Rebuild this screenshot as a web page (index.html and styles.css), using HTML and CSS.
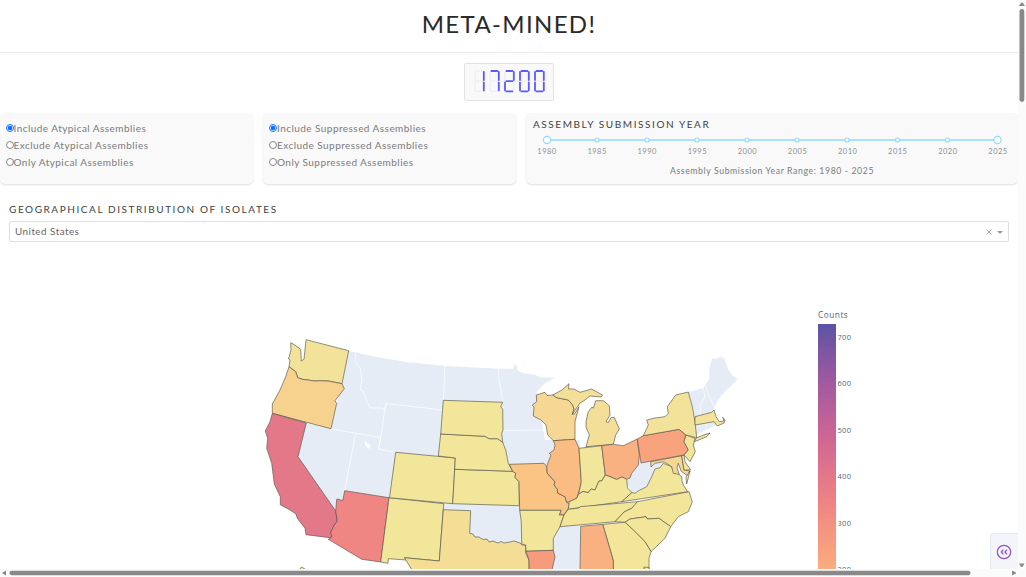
FILE: index.html
```html
<!DOCTYPE html>
<html lang="en">
<head>
<meta charset="utf-8">
<title>META-MINED!</title>
<link rel="stylesheet" href="styles.css">
</head>
<body>
<div class="app">
<main class="page">
  <header class="header"><h1>META-MINED!</h1></header>
  <div class="counter">
    <svg id="lcd" width="88" height="36" viewBox="0 0 88 36" role="img" aria-label="17200"></svg>
  </div>
  <section class="filters">
    <div class="card choices">
      <label><i class="radio on"></i><span>Include Atypical Assemblies</span></label>
      <label><i class="radio"></i><span>Exclude Atypical Assemblies</span></label>
      <label><i class="radio"></i><span>Only Atypical Assemblies</span></label>
    </div>
    <div class="card choices">
      <label><i class="radio on"></i><span>Include Suppressed Assemblies</span></label>
      <label><i class="radio"></i><span>Exclude Suppressed Assemblies</span></label>
      <label><i class="radio"></i><span>Only Suppressed Assemblies</span></label>
    </div>
    <div class="card years">
      <h2>ASSEMBLY SUBMISSION YEAR</h2>
      <svg class="track" width="466" height="12" viewBox="539 134 466 12">
        <path d="M547 140H997.500" stroke="#abe2fb" stroke-width="2.200"/>
        <g fill="#fff" stroke="#96dbfa" stroke-width="1.200">
          <circle cx="597" cy="140" r="2"/><circle cx="647" cy="140" r="2"/><circle cx="697" cy="140" r="2"/><circle cx="747" cy="140" r="2"/><circle cx="797" cy="140" r="2"/><circle cx="847" cy="140" r="2"/><circle cx="897.500" cy="140" r="2"/><circle cx="947.500" cy="140" r="2"/>
          <circle cx="547" cy="140" r="3.600"/><circle cx="997.500" cy="140" r="3.600"/>
        </g>
      </svg>
      <div class="ticks"><span>1980</span><span>1985</span><span>1990</span><span>1995</span><span>2000</span><span>2005</span><span>2010</span><span>2015</span><span>2020</span><span>2025</span></div>
      <p>Assembly Submission Year Range: 1980 - 2025</p>
    </div>
  </section>
  <section class="geo">
    <h2>GEOGRAPHICAL DISTRIBUTION OF ISOLATES</h2>
    <div class="select"><span>United States</span>
      <svg width="20" height="10" viewBox="0 0 20 10"><path d="M2.500 2.500l5 5m0-5l-5 5" stroke="#aaa" stroke-width="1"/><path d="M13 4h6l-3 3z" fill="#999"/></svg>
    </div>
  </section>
  <section class="plot">
    <svg class="map" width="500" height="245" viewBox="250 324 500 245">
      <g class="land">
        <path d="M348.700 350.700L375 356.700 408.300 362.300 445 366 498.300 368.700 513.300 368.700 514.300 364 516.300 364.700 517.700 370.700 523 373 535 374.700 541 377.500 555 377.700 544 384 536.700 391.700 545 440 580 440V569H500L450 555H385L345 530 335.700 511 298 456.700 306.300 423 331 428.700 342 383Z"/>
        <path d="M639.300 455L641 463 650.700 461.700 651 467 655 463.300 664 461.700 660 467.700 655 469 651.700 476.700 646.700 486.700 638 491 635 493.300 630.500 491 626.700 481.700 631.700 473.300 638.300 465Z"/>
        <path d="M688.300 392L703.300 388.300 705 385 709.300 379 709.300 368.300 712.300 358.300 715.500 359 721 356.700 724.500 359 728.300 370 732 375 737.700 379.300 731.700 385 721.700 395 718 400 714 408.300 711.700 412.300 695 416.700 692.300 406.700Z"/>
        <path d="M695 425L714 421.700 716 425 706 430 696 434.300Z"/>
        <path class="lines" d="M355.500 352.500L355 361 360 368 362 380 360 390 363 391 367 402 370 408 382 408 385 410 387 403M331 428.700L380.700 437.700M355.500 434L344.700 490.700M380.700 437.700L378.500 449 395.700 452.300M385.500 403L382 430 378.500 449M385.500 403.500L443 410M445 366L443.300 400.300M498.300 368.700L499 380 501 390 502.700 402M503 430.500L545 430M703.300 388.300L705 397 701 403 700 415M705 385L710 398 715 408M706 423L706 430"/>
        <path fill="#fff" stroke="none" d="M364.500 440.500l6 4.500-1 4-4-3z"/>
      </g>
      <g class="states">
        <path fill="#f3e39a" d="M290.700 342.700L295 345 300.700 349.300 301.300 361 304 359.300 305.300 346.700 306 339.700 348.700 350.700 342 383.700 328.300 381 320 380.800 314 381 308.300 380 303 379.500 297.700 377.700 295.700 371.700 289 366.700 290 360 288.500 359 291 350Z"/>
        <path fill="#f7d18e" d="M289 366.700L295.700 371.700 297.700 377.700 303 379.500 308.300 380 314 381 320 380.800 328.300 381 342 383.700 344.300 388.700 335 400.700 336.700 403.300 331 428.700 272.300 413.300V404L280 390 285.700 376.700Z"/>
        <path fill="#e37889" d="M272.300 413.300L306.300 423 298 456.700 335.700 511 337.300 521 333.700 526 330.700 532.300 332 536.700 330 537.700 306 534.700 305 528.300 297.300 518.300 296 514 290 510 280.300 504.700V496.700L274.300 484 271.700 463.300 266.700 448.300 267.700 438.300 265.300 431 270 421.700Z"/>
        <path fill="#ef8683" d="M344.700 490.700L389 497.700 380.700 562 361.700 559.300 328.300 539.300 332 536.700 330.700 532.300 333.700 526 337.300 521 335.700 511 336.700 499.300 338 499 342.700 500.700Z"/>
        <path d="M389 497.700L443.700 503.700 439.300 561 405 557.700 406.300 560 388.300 558.700 388 563.300 380.700 562Z"/>
        <path d="M395.700 452.300L455.300 458 452.700 503.700 389.500 497.700Z"/>
        <path d="M454.700 469.300L512.700 471.300 515.700 473.300 515 477.300 519 481.700 519.300 505.700 452.700 503.700Z"/>
        <path d="M440.700 434L485 436.300 489 438.700 497.700 438.700 502.700 442.300 505.700 450 508.300 463.300 512.700 471.300 454.700 469.300 455.300 458 438.300 456Z"/>
        <path d="M443.300 400.300L502.700 402.300 500.700 406.700 502.700 409.300 503 430 501.700 433.300 502.700 442.300 497.700 438.700 489 438.700 485 436.300 440.700 434Z"/>
        <path fill="#f4de96" d="M443.300 509.700L470.700 510.700 469.700 533.300 473 534 475 537 479 537 483 539.500 487 539 489 542 493 541 498 543 501 541.500 504 543 510 542 514 541 520 543 522 545 525.700 545 525.700 553.300 529 560V571H412.700L404.300 557.700 439.300 561Z"/>
        <path fill="#fac484" d="M509.300 464.300L544 463.300 546.700 466.700 547.300 473.300 555 481.700 554 485 557.300 489 557.500 493 565 496.700 566.700 502.300 569.300 504 568.300 508.300 564 515 559.300 515 561 510.300 519.700 510.300 519 481.700 515 477.300 515.700 473.300 512.700 471.300Z"/>
        <path d="M519.700 510.300L561 510.300 559.300 515 564 515 560 526.700 553.300 538.300 553.300 550.300 526 551.300 525.700 545 521.700 544 521.300 521.700Z"/>
        <path fill="#f79b7d" d="M526 551.300L553.300 550.300 555 557 551.700 571H529.300L529 560Z"/>
        <path fill="#f6d794" d="M536.300 395L545 392.300 547 395.500 552.700 395 556.700 397.700 568.300 400 572.700 405 574 409 572.300 414.300 574.500 414 579 406.700 575 421.700V439.300L553.300 440.700 547.700 435 546 425 541 420 533.300 416 534 407 532.300 405 536.700 401.700Z"/>
        <path fill="#f3df98" d="M552.700 395L562 390 569 383.700 568.500 389 574 389 580 392.300 591.700 389 596 391.500 602.700 395 601 397 590 396 585 400 580 403 572.300 414.300 574 409 572.700 405 568.300 400 556.700 397.700Z"/>
        <path fill="#f3df98" d="M595.700 400.700L603.300 400.700 609.300 405.700 610 415 606 421.700 608.300 422.700 611 417.500 614.300 417.300 619.300 429 615.700 435 613.300 444.300 586 446.700 589.300 435 586 427 586 421.700 588.300 411.700 592 407 593.300 408.300Z"/>
        <path fill="#fabc82" d="M553.300 440.700L575 439.300 579 448.300 581.300 481.700 579.300 490 576.700 498.300 569.300 501.700 566.700 502.300 565 496.700 557.500 493 557.300 489 554 485 555 481.700 547.300 473.300 546.700 466.700 548.300 461.700 551 455 549.300 453.300 554 450 555 445Z"/>
        <path d="M579 448.300L601.700 445.700 605.300 475 601.700 481 599 481 595 490 591 489 588.300 492.700 583 491.500 578.700 494 581.300 481.700Z"/>
        <path fill="#f9b181" d="M601.700 445.700L613.300 444.300 623.300 445.700 637.300 439 639.300 455 638.300 465 631.700 473.300 630 478 626.700 479.300 622 477 616.700 479.500 610 476.700 605.300 475Z"/>
        <path d="M605.300 475L610 476.700 616.700 479.500 622 477 626.700 479.300 627.500 488 632 492.500 621.700 501.700 568.300 509.300 569.300 501.700 576.700 498.300 578.700 494 583 491.500 588.300 492.700 591 489 595 490 599 481 601.700 481Z"/>
        <path d="M568.300 509.300L579 508 580 506.700 637.300 501.700 636 504 631.700 508.300 624 512 615 521.700 560 526.700 564 515Z"/>
        <path fill="#f3e59a" d="M637.300 501.700L689 491.700 692.300 501.700 688.300 511.700 678.300 516.700 670.700 526.700 659 518.300 647.300 519 646 516.700 630 519 625 522.300 615 521.700 624 512 631.700 508.300Z"/>
        <path d="M625 522.300L630 519 646 516.700 647.300 519 659 518.300 670.700 526.700 665 538.300 651 551.700 645 541.700 633.300 530Z"/>
        <path fill="#f3e59a" d="M602.700 524.300L625 522.300 633.300 530 645 541.700 651 551.700 649 558.300V571H613.300L613.300 561 611.700 555Z"/>
        <path fill="#f9b181" d="M580.700 526.300L602.700 524.300 611.700 555 613.300 561V571H580Z"/>
        <path d="M635 493.300L638 491 646.700 486.700 651.700 476.700 655 469 660 467.700 663.300 463.300 671.700 466.700 672.700 470 677 473 681.700 476.700 682 481 683.300 485 687.700 491.700 621.700 501.700 632 492.500Z"/>
        <path fill="#f5d693" d="M650.700 461.700L681.700 455.700 684 470 690 471 687.300 475.700 681 471 678.300 463.300 677 468 679.300 474.300 673.300 473.300 671.700 466.700 664 461.700 655 463.300 651 467Z"/>
        <path d="M681.700 455.700L684 455 685 461.700 690.700 470 684 470ZM690 471L686.700 484 686 477Z"/>
        <path fill="#f8a27e" d="M637.300 439L643.300 435.700 679 429.300 686 435 684 441.700 688.300 450 684 455 641 463Z"/>
        <path d="M686 435L695 438.300 693.300 445 695.300 451.700 690 461.700 684 455 688.300 450 684 441.700Z"/>
        <path fill="#f3e39a" d="M643.300 435.700L648.300 425 646.700 420 655 418 665 416.700 668.300 413.300 667.300 406.700 675.700 395 688.300 392 692.300 406.700 695 421.700 696.700 437.700 686 435 679 429.300ZM696 438L705 434.500 710 433 706.700 436.700 694.500 441.700Z"/>
        <path fill="#f3e39a" d="M695 416.700L711.700 412.300 714 410 716 416.700 719.300 421.700 724 421 722.700 417.300 725 420 724 423 717.300 426 714 421.700 695 425Z"/>
        <path d="M299 570l2.500-3 5 3zM644 569v-2l5 .500v3z"/>
      </g>
    </svg>
    <div class="legend">
      <div class="bar"></div>
      <div class="values"><span>700</span><span>600</span><span>500</span><span>400</span><span>300</span><span>200</span></div>
    </div>
    <div class="legend-title">Counts</div>
  </section>
</main>
<aside class="vscroll">
  <svg width="8" height="569" viewBox="0 0 8 569"><g fill="#898989"><path d="M.800 6L3.500 2.500 4.500 2.500 7 6z"/><rect x="1.500" y="9" width="4.800" height="93" rx="2.400"/><path d="M1 563.500h5.500l-2 3.500H3z"/></g></svg>
</aside>
<button class="debug" aria-label="Open menu"><svg width="16" height="16" viewBox="0 0 16 16" fill="none" stroke="#8a4fc9"><circle cx="8" cy="8" r="6.700" stroke-width="1.200"/><path d="M7.400 5.700L5.200 8l2.200 2.300M11 5.700L8.800 8 11 10.300" stroke-width="1.200"/></svg></button>
<footer class="hscroll"><svg width="1026" height="8" viewBox="0 0 1026 8"><g fill="#898989"><path d="M6 1.500v5L2.500 4.500v-1z"/><rect x="9.500" y="1.700" width="961" height="4.600" rx="2.300"/><path d="M1012 1.500v5l4-2v-1z"/></g></svg></footer>
</div>
<script src="lcd.js"></script>
</body>
</html>
```
FILE: styles.css
```css
* { box-sizing: border-box; }
body { margin: 0; width: 1026px; height: 577px; overflow: hidden; background: #fff; font-family: Lato, "Open Sans", sans-serif; color: #7b7b7b; }
h1, h2, p { margin: 0; font-weight: 400; }
.app { position: relative; display: grid; grid-template: 569px 8px / 1018px 8px; }
.page { overflow: hidden; display: flex; flex-direction: column; }
.header { height: 53px; padding-top: 8px; border-bottom: 1px solid #ececec; text-align: center; }
h1 { font-size: 24px; line-height: 32px; letter-spacing: 1.350px; color: #2a2a2a; }
.counter { align-self: center; width: 90px; height: 38px; margin-top: 10px; background: #f9f9f9; border: 1px solid #e3e3e3; border-radius: 2px; }
.counter svg { display: block; }
.filters { display: flex; gap: 10px; margin-top: 12px; height: 71px; }
.card { background: #f9f9f9; border-radius: 5px; box-shadow: 0 1px 2px rgba(0,0,0,.13); }
.choices { width: 253px; padding: 6.500px 5.500px; }
.choices + .choices { padding-left: 6px; }
.choices label { display: flex; align-items: center; height: 17px; font-size: 10px; letter-spacing: .450px; white-space: nowrap; }
.radio { width: 8px; height: 8px; border: 1px solid #858585; border-radius: 50%; background: #fff; flex: none; }
.radio.on { border-color: #1677ff; background: radial-gradient(#0875ff 0 2px, #fff 2.700px); }
.years { width: 492px; }
h2 { font-size: 10px; line-height: 14px; letter-spacing: 1.570px; color: #424242; }
.years h2 { padding: 4px 0 0 7px; }
.track { display: block; margin: 3px 0 0 13px; }
.ticks { display: flex; justify-content: space-between; margin: 2px 9px 0 10px; font-size: 7.500px; line-height: 8px; letter-spacing: .500px; color: #8e8e8e; }
.ticks span { width: 22px; text-align: center; }
.years p { text-align: center; font-size: 8.700px; line-height: 12px; margin-top: 9px; letter-spacing: .610px; }
.geo { padding: 18px 9px 0; }
.select { display: flex; align-items: center; justify-content: space-between; height: 21px; margin-top: 5px; padding: 0 4px 0 5px; border: 1px solid #ddd; border-radius: 2px; font-size: 9.800px; letter-spacing: .500px; color: #666; }
.select span { padding-bottom: 2px; }
.plot { position: relative; display: flex; margin-top: 82px; padding-left: 250px; font-family: "Open Sans", sans-serif; color: #53657e; }
.map { display: block; flex: none; }
.land { fill: #e5ecf6; }
.lines { fill: none; stroke: #fff; stroke-width: .700; }
.states { fill: #f2e69b; stroke: #555548; stroke-width: .650; stroke-linejoin: round; }
.legend { display: flex; height: 245px; margin-left: 67.500px; overflow: hidden; }
.bar { width: 18px; height: 338px; flex: none; background: linear-gradient(#5c53a5, #a059a0 16.670%, #ce6693 33.330%, #eb7f86 50%, #f8a07e 66.670%, #fac484 83.330%, #f3e79b); }
.values { display: flex; flex-direction: column; margin: 7.500px 0 0 2px; font-size: 7.500px; line-height: 10px; letter-spacing: .300px; gap: 36.600px; }
.values span { flex: none; }
.legend-title { position: absolute; left: 818px; top: -15px; font-size: 8.300px; line-height: 12px; letter-spacing: .500px; }
.vscroll, .hscroll { background: #fbfbfb; }
.hscroll { grid-column: 1 / 3; }
.vscroll svg, .hscroll svg { display: block; }
.debug { position: absolute; left: 990px; top: 533px; width: 28px; height: 36px; padding: 0 0 0 5px; display: flex; align-items: center; border: 1px solid #e6e8f0; border-width: 1px 0 0 1px; border-radius: 3px 0 0; background: #f4f5fa; }
```
FILE: lcd.js
```js
const segments = [
  "M2 0H8", "M9.4 1V9", "M9.4 11.400V19.400", "M2 20.400H8",
  "M.600 11.400V19.400", "M.600 1V9", "M2 10.200H8"
];
const lit = { 0: [0, 1, 2, 3, 4, 5], 1: [1, 2], 2: [0, 1, 3, 4, 6], 7: [0, 1, 2] };
let out = "";
[..."17200"].forEach((digit, index) => {
  out += `<g transform="translate(${9.4 + index * 15} 7)" fill="none" stroke-width="1.800" stroke-linecap="round">`;
  segments.forEach((d, s) => { if (!lit[digit].includes(s)) out += `<path d="${d}" stroke="#f1f1f1"/>`; });
  lit[digit].forEach(s => { out += `<path d="${segments[s]}" stroke="#5a5aff"/>`; });
  out += "</g>";
});
document.getElementById("lcd").innerHTML = out;
```
